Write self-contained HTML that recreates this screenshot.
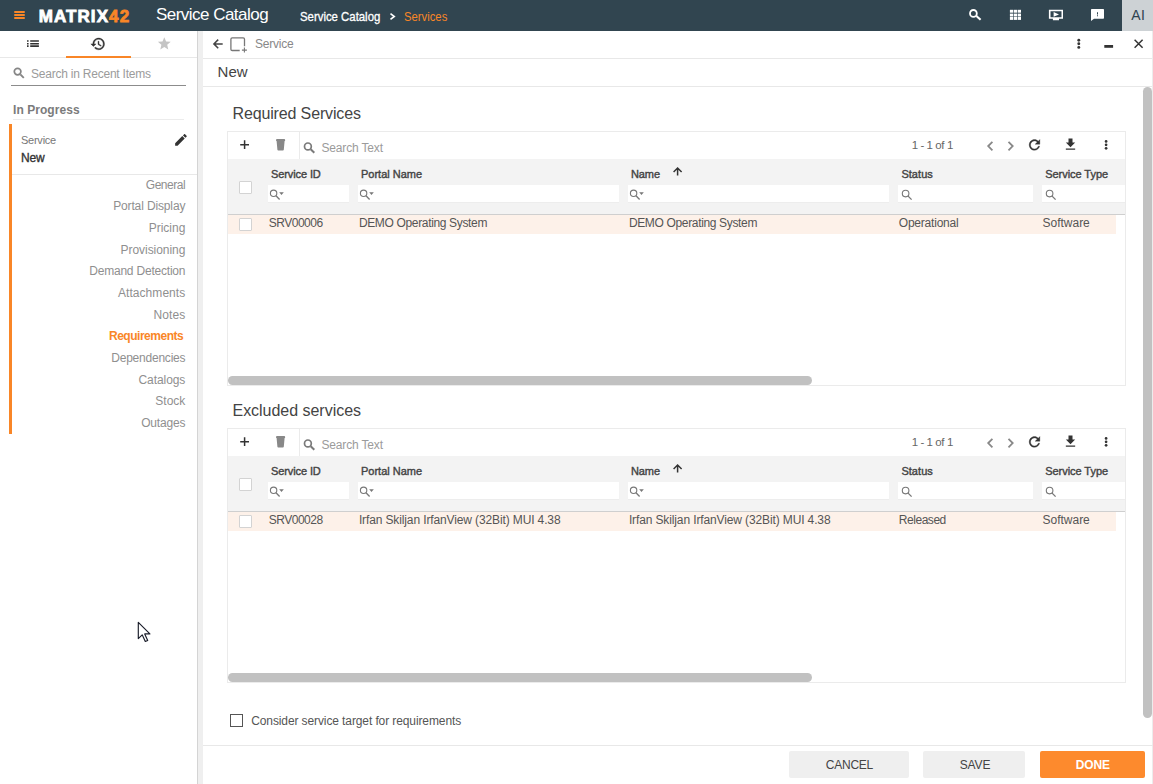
<!DOCTYPE html>
<html><head><meta charset="utf-8">
<style>
*{box-sizing:border-box;margin:0;padding:0}
html,body{width:1153px;height:784px;overflow:hidden;background:#fff;font-family:"Liberation Sans",sans-serif;color:#333}
.a{position:absolute;display:block}
.t{position:absolute;white-space:nowrap;line-height:1}
</style></head><body>
<div class="a" style="left:0px;top:0px;width:1153px;height:31px;background:#314550;"></div>
<div class="a" style="left:13.8px;top:11px;width:11.4px;height:2px;background:#f98627;border-radius:1px"></div>
<div class="a" style="left:13.8px;top:14px;width:11.4px;height:2px;background:#f98627;border-radius:1px"></div>
<div class="a" style="left:13.8px;top:17px;width:11.4px;height:2px;background:#f98627;border-radius:1px"></div>
<div class="t" style="left:38.7px;top:7.7px;font-size:17px;color:#fff;font-weight:bold;letter-spacing:1.082px;-webkit-text-stroke:0.8px #fff">MATRIX<span style="color:#f98627;-webkit-text-stroke:0.8px #f98627">42</span></div>
<div class="t" style="left:156px;top:5.8px;font-size:17px;color:#fff;font-weight:normal;letter-spacing:-0.530px;">Service Catalog</div>
<div class="t" style="left:299.5px;top:10.4px;font-size:13px;color:#fff;font-weight:normal;letter-spacing:0px;transform:scaleX(0.875);transform-origin:0 0;-webkit-text-stroke:0.3px #fff">Service Catalog</div>
<div class="t" style="left:403.5px;top:9.9px;font-size:13px;color:#f98627;font-weight:normal;letter-spacing:0px;transform:scaleX(0.868);transform-origin:0 0;">Services</div>
<div class="a" style="left:1122px;top:0px;width:31px;height:31px;background:#cdd2d5;"></div>
<div class="t" style="left:1131.3px;top:8.3px;font-size:14px;color:#2f4350;font-weight:normal;letter-spacing:0.3px;">AI</div>
<div class="a" style="left:0px;top:57px;width:197px;height:1px;background:#e8e8e8;"></div>
<div class="a" style="left:66px;top:56px;width:65px;height:2px;background:#f98627;"></div>
<div class="a" style="left:197px;top:31px;width:1px;height:753px;background:#d4d4d4;"></div>
<div class="a" style="left:198px;top:31px;width:5px;height:753px;background:#efefef;"></div>
<div class="t" style="left:31px;top:67.7px;font-size:12px;color:#9b9b9b;font-weight:normal;letter-spacing:-0.225px;">Search in Recent Items</div>
<div class="a" style="left:11px;top:85px;width:175px;height:1px;background:#8c8c8c;"></div>
<div class="t" style="left:13px;top:103.7px;font-size:12px;color:#7b7b7b;font-weight:bold;letter-spacing:0.057px;">In Progress</div>
<div class="a" style="left:13px;top:119px;width:171px;height:1px;background:#ececec;"></div>
<div class="a" style="left:9px;top:124px;width:3px;height:310px;background:#f98627;"></div>
<div class="t" style="left:21px;top:135.1px;font-size:11px;color:#777;font-weight:normal;letter-spacing:-0.248px;">Service</div>
<div class="t" style="left:21px;top:151.6px;font-size:12px;color:#333;font-weight:normal;letter-spacing:-0.158px;-webkit-text-stroke:0.35px #333">New</div>
<div class="a" style="left:12px;top:174px;width:185px;height:1px;background:#e8e8e8;"></div>
<div class="t" style="right:967.7px;top:178.6px;font-size:12px;color:#8f8f8f;font-weight:normal;letter-spacing:-0.451px;">General</div>
<div class="t" style="right:967.7px;top:200.3px;font-size:12px;color:#8f8f8f;font-weight:normal;letter-spacing:-0.133px;">Portal Display</div>
<div class="t" style="right:967.7px;top:221.9px;font-size:12px;color:#8f8f8f;font-weight:normal;letter-spacing:-0.015px;">Pricing</div>
<div class="t" style="right:967.7px;top:243.6px;font-size:12px;color:#8f8f8f;font-weight:normal;letter-spacing:-0.052px;">Provisioning</div>
<div class="t" style="right:967.7px;top:265.2px;font-size:12px;color:#8f8f8f;font-weight:normal;letter-spacing:-0.206px;">Demand Detection</div>
<div class="t" style="right:967.7px;top:286.9px;font-size:12px;color:#8f8f8f;font-weight:normal;letter-spacing:0.060px;">Attachments</div>
<div class="t" style="right:967.7px;top:308.5px;font-size:12px;color:#8f8f8f;font-weight:normal;letter-spacing:0.110px;">Notes</div>
<div class="t" style="right:969.8px;top:330.2px;font-size:12px;color:#f98627;font-weight:bold;letter-spacing:-0.485px;">Requirements</div>
<div class="t" style="right:967.7px;top:351.8px;font-size:12px;color:#8f8f8f;font-weight:normal;letter-spacing:-0.221px;">Dependencies</div>
<div class="t" style="right:967.7px;top:373.5px;font-size:12px;color:#8f8f8f;font-weight:normal;letter-spacing:-0.068px;">Catalogs</div>
<div class="t" style="right:967.7px;top:395.1px;font-size:12px;color:#8f8f8f;font-weight:normal;letter-spacing:-0.004px;">Stock</div>
<div class="t" style="right:967.7px;top:416.8px;font-size:12px;color:#8f8f8f;font-weight:normal;letter-spacing:-0.179px;">Outages</div>
<div class="t" style="left:255px;top:38.4px;font-size:12px;color:#888;font-weight:normal;letter-spacing:-0.236px;">Service</div>
<div class="a" style="left:203px;top:58px;width:950px;height:1px;background:#e8e8e8;"></div>
<div class="t" style="left:217.6px;top:64.0px;font-size:15px;color:#444;font-weight:normal;letter-spacing:0.042px;">New</div>
<div class="a" style="left:203px;top:86px;width:950px;height:1px;background:#e8e8e8;"></div>
<div class="t" style="left:232.5px;top:106.1px;font-size:16px;color:#444;font-weight:normal;letter-spacing:-0.140px;">Required Services</div>
<div class="a" style="left:227px;top:131px;width:899px;height:255px;background:#fff;border:1px solid #ebebeb"></div>
<div class="a" style="left:299px;top:132px;width:1px;height:27px;background:#ebebeb;"></div>
<div class="t" style="left:321.5px;top:142.1px;font-size:12px;color:#9b9b9b;font-weight:normal;letter-spacing:-0.166px;">Search Text</div>
<div class="t" style="left:911.7px;top:140.0px;font-size:11.5px;color:#666;font-weight:normal;letter-spacing:-0.421px;">1 - 1 of 1</div>
<div class="a" style="left:228px;top:159px;width:897px;height:55px;background:#f3f3f3;"></div>
<div class="a" style="left:228px;top:214px;width:897px;height:1px;background:#cfcfcf;"></div>
<div class="a" style="left:239px;top:180.5px;width:13px;height:13px;background:#fff;border:1px solid #d3d3d3;border-radius:1px"></div>
<div class="t" style="left:271px;top:169.2px;font-size:11px;color:#444;font-weight:normal;letter-spacing:-0.106px;-webkit-text-stroke:0.4px #444">Service ID</div>
<div class="a" style="left:268px;top:185px;width:81px;height:18px;background:#fff;border-bottom:1px solid #ededed"></div>
<div class="t" style="left:361px;top:169.2px;font-size:11px;color:#444;font-weight:normal;letter-spacing:-0.004px;-webkit-text-stroke:0.4px #444">Portal Name</div>
<div class="a" style="left:358px;top:185px;width:261px;height:18px;background:#fff;border-bottom:1px solid #ededed"></div>
<div class="t" style="left:631px;top:169.2px;font-size:11px;color:#444;font-weight:normal;letter-spacing:-0.115px;-webkit-text-stroke:0.4px #444">Name</div>
<div class="a" style="left:628px;top:185px;width:261px;height:18px;background:#fff;border-bottom:1px solid #ededed"></div>
<div class="t" style="left:901.4px;top:169.2px;font-size:11px;color:#444;font-weight:normal;letter-spacing:0.042px;-webkit-text-stroke:0.4px #444">Status</div>
<div class="a" style="left:898px;top:185px;width:135px;height:18px;background:#fff;border-bottom:1px solid #ededed"></div>
<div class="t" style="left:1045.2px;top:169.2px;font-size:11px;color:#444;font-weight:normal;letter-spacing:-0.045px;-webkit-text-stroke:0.4px #444">Service Type</div>
<div class="a" style="left:1042px;top:185px;width:83px;height:18px;background:#fff;border-bottom:1px solid #ededed"></div>
<div class="a" style="left:228px;top:215px;width:888px;height:19px;background:#fdf1e9;"></div>
<div class="a" style="left:239px;top:218px;width:13px;height:13px;background:#fff;border:1px solid #d3d3d3;border-radius:1px"></div>
<div class="t" style="left:268.7px;top:217.2px;font-size:12px;color:#555;font-weight:normal;letter-spacing:-0.475px;">SRV00006</div>
<div class="t" style="left:358.9px;top:217.2px;font-size:12px;color:#555;font-weight:normal;letter-spacing:-0.344px;">DEMO Operating System</div>
<div class="t" style="left:628.9px;top:217.2px;font-size:12px;color:#555;font-weight:normal;letter-spacing:-0.344px;">DEMO Operating System</div>
<div class="t" style="left:898.8px;top:217.2px;font-size:12px;color:#555;font-weight:normal;letter-spacing:-0.215px;">Operational</div>
<div class="t" style="left:1042.6px;top:217.2px;font-size:12px;color:#555;font-weight:normal;letter-spacing:-0.023px;">Software</div>
<div class="a" style="left:228px;top:376px;width:584px;height:9px;background:#c1c1c1;border-radius:4.5px"></div>
<div class="t" style="left:232.5px;top:403.1px;font-size:16px;color:#444;font-weight:normal;letter-spacing:-0.028px;">Excluded services</div>
<div class="a" style="left:227px;top:428px;width:899px;height:255px;background:#fff;border:1px solid #ebebeb"></div>
<div class="a" style="left:299px;top:429px;width:1px;height:27px;background:#ebebeb;"></div>
<div class="t" style="left:321.5px;top:439.1px;font-size:12px;color:#9b9b9b;font-weight:normal;letter-spacing:-0.166px;">Search Text</div>
<div class="t" style="left:911.7px;top:437.0px;font-size:11.5px;color:#666;font-weight:normal;letter-spacing:-0.421px;">1 - 1 of 1</div>
<div class="a" style="left:228px;top:456px;width:897px;height:55px;background:#f3f3f3;"></div>
<div class="a" style="left:228px;top:511px;width:897px;height:1px;background:#cfcfcf;"></div>
<div class="a" style="left:239px;top:477.5px;width:13px;height:13px;background:#fff;border:1px solid #d3d3d3;border-radius:1px"></div>
<div class="t" style="left:271px;top:466.2px;font-size:11px;color:#444;font-weight:normal;letter-spacing:-0.106px;-webkit-text-stroke:0.4px #444">Service ID</div>
<div class="a" style="left:268px;top:482px;width:81px;height:18px;background:#fff;border-bottom:1px solid #ededed"></div>
<div class="t" style="left:361px;top:466.2px;font-size:11px;color:#444;font-weight:normal;letter-spacing:-0.004px;-webkit-text-stroke:0.4px #444">Portal Name</div>
<div class="a" style="left:358px;top:482px;width:261px;height:18px;background:#fff;border-bottom:1px solid #ededed"></div>
<div class="t" style="left:631px;top:466.2px;font-size:11px;color:#444;font-weight:normal;letter-spacing:-0.115px;-webkit-text-stroke:0.4px #444">Name</div>
<div class="a" style="left:628px;top:482px;width:261px;height:18px;background:#fff;border-bottom:1px solid #ededed"></div>
<div class="t" style="left:901.4px;top:466.2px;font-size:11px;color:#444;font-weight:normal;letter-spacing:0.042px;-webkit-text-stroke:0.4px #444">Status</div>
<div class="a" style="left:898px;top:482px;width:135px;height:18px;background:#fff;border-bottom:1px solid #ededed"></div>
<div class="t" style="left:1045.2px;top:466.2px;font-size:11px;color:#444;font-weight:normal;letter-spacing:-0.045px;-webkit-text-stroke:0.4px #444">Service Type</div>
<div class="a" style="left:1042px;top:482px;width:83px;height:18px;background:#fff;border-bottom:1px solid #ededed"></div>
<div class="a" style="left:228px;top:512px;width:888px;height:19px;background:#fdf1e9;"></div>
<div class="a" style="left:239px;top:515px;width:13px;height:13px;background:#fff;border:1px solid #d3d3d3;border-radius:1px"></div>
<div class="t" style="left:268.7px;top:514.2px;font-size:12px;color:#555;font-weight:normal;letter-spacing:-0.475px;">SRV00028</div>
<div class="t" style="left:358.9px;top:514.2px;font-size:12px;color:#555;font-weight:normal;letter-spacing:-0.124px;">Irfan Skiljan IrfanView (32Bit) MUI 4.38</div>
<div class="t" style="left:628.9px;top:514.2px;font-size:12px;color:#555;font-weight:normal;letter-spacing:-0.124px;">Irfan Skiljan IrfanView (32Bit) MUI 4.38</div>
<div class="t" style="left:898.8px;top:514.2px;font-size:12px;color:#555;font-weight:normal;letter-spacing:-0.458px;">Released</div>
<div class="t" style="left:1042.6px;top:514.2px;font-size:12px;color:#555;font-weight:normal;letter-spacing:-0.023px;">Software</div>
<div class="a" style="left:228px;top:673px;width:584px;height:9px;background:#c1c1c1;border-radius:4.5px"></div>
<div class="a" style="left:230px;top:714px;width:13px;height:13px;background:#fff;border:1.5px solid #555"></div>
<div class="t" style="left:251.2px;top:715.0px;font-size:12px;color:#555;font-weight:normal;letter-spacing:-0.105px;">Consider service target for requirements</div>
<div class="a" style="left:1152px;top:31px;width:1px;height:753px;background:#ececec;"></div>
<div class="a" style="left:1143px;top:87px;width:9px;height:631px;background:#c1c1c1;border-radius:4.5px"></div>
<div class="a" style="left:203px;top:745px;width:950px;height:1px;background:#e8e8e8;"></div>
<div class="a" style="left:789px;top:751px;width:120px;height:27px;background:#efefef;border-radius:2px"></div>
<div class="t" style="left:825.8px;top:759.1px;font-size:12px;color:#444;font-weight:normal;letter-spacing:-0.237px;">CANCEL</div>
<div class="a" style="left:923px;top:751px;width:102px;height:27px;background:#efefef;border-radius:2px"></div>
<div class="t" style="left:959.7px;top:759.1px;font-size:12px;color:#444;font-weight:normal;letter-spacing:-0.142px;">SAVE</div>
<div class="a" style="left:1040px;top:751px;width:105px;height:27px;background:#fd8a2d;border-radius:2px"></div>
<div class="t" style="left:1075.8px;top:759.1px;font-size:12px;color:#fff;font-weight:bold;letter-spacing:-0.157px;">DONE</div>
<svg class="a" style="left:0;top:0" width="1153" height="784" viewBox="0 0 1153 784"><path d="M390.5 13.6L394.3 16.5L390.5 19.4" fill="none" stroke="#fff" stroke-width="1.6" /><circle cx="973.4" cy="13.4" r="3.4" fill="none" stroke="#fff" stroke-width="1.8"/><path d="M976.39 16.06L980.6 19.8" stroke="#fff" stroke-width="2.1" stroke-linecap="butt"/><path d="M1009.9 9.8h3.3v2.9h-3.3z" fill="#fff"/><path d="M1009.9 13.6h3.3v2.9h-3.3z" fill="#fff"/><path d="M1009.9 17.0h3.3v2.9h-3.3z" fill="#fff"/><path d="M1013.8 9.8h3.3v2.9h-3.3z" fill="#fff"/><path d="M1013.8 13.6h3.3v2.9h-3.3z" fill="#fff"/><path d="M1013.8 17.0h3.3v2.9h-3.3z" fill="#fff"/><path d="M1017.7 9.8h3.3v2.9h-3.3z" fill="#fff"/><path d="M1017.7 13.6h3.3v2.9h-3.3z" fill="#fff"/><path d="M1017.7 17.0h3.3v2.9h-3.3z" fill="#fff"/><path d="M1048.9 9.7h14.1v9h-4v1.6h-6.1v-1.6h-4zM1050.5 11.2v6h11v-6z" fill="#fff"/><path d="M1053.6 12l5.4 2.4-5.4 2.4z" fill="#fff"/><path d="M1092 8.9h11c.6 0 1 .4 1 1v7.8c0 .6-.4 1-1 1h-9l-3 2.3v-11.1c0-.6.4-1 1-1z" fill="#fff"/><path d="M1097 12.3h1v2.2h-1zM1097 15.2h1v1h-1z" fill="#314550"/><path d="M27 40.2h1.6v1.6h-1.6zM30.2 40.2h8.7v1.6h-8.7z" fill="#333"/><path d="M27 42.9h1.6v1.6h-1.6zM30.2 42.9h8.7v1.6h-8.7z" fill="#333"/><path d="M27 45.3h1.6v1.6h-1.6zM30.2 45.3h8.7v1.6h-8.7z" fill="#333"/><path transform="translate(90.20,36.10) scale(0.6500)" d="M13 3c-4.970 0-9 4.03-9 9H1l3.89 3.89.07.14L9 12H6c0-3.87 3.13-7 7-7s7 3.13 7 7-3.13 7-7 7c-1.93 0-3.68-.79-4.94-2.06l-1.42 1.42C8.27 19.99 10.51 21 13 21c4.97 0 9-4.03 9-9s-4.03-9-9-9zm-1 5v5l4.28 2.54.72-1.21-3.5-2.08V8H12z" fill="#333" stroke="#333" stroke-width="0.6"/><path transform="translate(156.60,35.90) scale(0.6417)" d="M12 17.27L18.18 21l-1.64-7.03L22 9.24l-7.19-.61L12 2 9.19 8.63 2 9.24l5.46 4.73L5.82 21z" fill="#c4c4c4"/><circle cx="17.6" cy="71.6" r="3.3" fill="none" stroke="#858585" stroke-width="1.7"/><path d="M20.32 74.32L23.8 77.8" stroke="#858585" stroke-width="1.9" stroke-linecap="butt"/><path transform="translate(173.20,132.10) scale(0.6458)" d="M3 17.25V21h3.75L17.81 9.94l-3.75-3.75L3 17.25zM20.71 7.04c.39-.39.39-1.02 0-1.41l-2.34-2.34c-.39-.39-1.02-.39-1.41 0l-1.83 1.83 3.75 3.75 1.83-1.83z" fill="#333"/><path d="M222.7 43.9H214.2M218.2 39.6L213.9 43.9L218.2 48.2" fill="none" stroke="#444" stroke-width="1.5" /><path d="M240.5 37.9h-8.3c-.8 0-1.3.5-1.3 1.3v10c0 .8.5 1.3 1.3 1.3h7.5M244.5 46.2v-7c0-.8-.5-1.3-1.3-1.3h-2.7" fill="none" stroke="#777" stroke-width="1.3" /><path d="M244.4 47.6v5M241.9 50.1h5" fill="none" stroke="#777" stroke-width="1.1" /><circle cx="1078.8" cy="40.2" r="1.45" fill="#333"/><circle cx="1078.8" cy="43.8" r="1.45" fill="#333"/><circle cx="1078.8" cy="47.4" r="1.45" fill="#333"/><path d="M1104.3 45h8.8v2.8h-8.8z" fill="#333"/><path d="M1134.6 39.8L1142.6 47.8M1142.6 39.8L1134.6 47.8" fill="none" stroke="#333" stroke-width="1.5" /><path d="M244.6 140.3v8.8M240.2 144.7h8.8" fill="none" stroke="#333" stroke-width="1.5" /><path d="M277.2 139h6.8c.7 0 1.1.4 1.1 1v1.1h-9v-1.1c0-.6.4-1 1.1-1zM276.6 141h8l-.8 8.8c-.1.4-.4.6-.8.6h-4.8c-.4 0-.7-.2-.8-.6z" fill="#888"/><circle cx="307.9" cy="146.4" r="3.4" fill="none" stroke="#7a7a7a" stroke-width="1.7"/><path d="M310.71 149.17L314.3 152.7" stroke="#7a7a7a" stroke-width="2" stroke-linecap="butt"/><path d="M992.4 141.8L988.2 146.1L992.4 150.4" fill="none" stroke="#888" stroke-width="1.8" /><path d="M1008.5 141.8L1012.7 146.1L1008.5 150.4" fill="none" stroke="#888" stroke-width="1.8" /><path transform="translate(1026.50,136.90) scale(0.6667)" d="M17.65 6.35C16.2 4.9 14.21 4 12 4c-4.42 0-7.99 3.58-7.99 8s3.57 8 7.99 8c3.73 0 6.84-2.55 7.73-6h-2.08c-.82 2.33-3.04 4-5.65 4-3.31 0-6-2.690-6-6s2.69-6 6-6c1.66 0 3.14.69 4.22 1.78L13 11h7V4l-2.35 2.35z" fill="#333" stroke="#333" stroke-width="0.5"/><path transform="translate(1062.50,136.50) scale(0.6667)" d="M19 9h-4V3H9v6H5l7 7 7-7zM5 18v2h14v-2H5z" fill="#333"/><circle cx="1106.1" cy="141.4" r="1.35" fill="#333"/><circle cx="1106.1" cy="144.8" r="1.35" fill="#333"/><circle cx="1106.1" cy="148.3" r="1.35" fill="#333"/><circle cx="273.6" cy="193.3" r="3.2" fill="none" stroke="#777" stroke-width="1.1"/><path d="M276.00 195.78L279.6 199.5" stroke="#777" stroke-width="1.3" stroke-linecap="butt"/><path d="M279.2 192.3h4.6l-2.3 2.8z" fill="#777"/><circle cx="363.6" cy="193.3" r="3.2" fill="none" stroke="#777" stroke-width="1.1"/><path d="M366.00 195.78L369.6 199.5" stroke="#777" stroke-width="1.3" stroke-linecap="butt"/><path d="M369.2 192.3h4.6l-2.3 2.8z" fill="#777"/><circle cx="633.6" cy="193.3" r="3.2" fill="none" stroke="#777" stroke-width="1.1"/><path d="M636.00 195.78L639.6 199.5" stroke="#777" stroke-width="1.3" stroke-linecap="butt"/><path d="M639.2 192.3h4.6l-2.3 2.8z" fill="#777"/><circle cx="905.6" cy="193.6" r="3.3" fill="none" stroke="#777" stroke-width="1.1"/><path d="M908.11 196.11L911.6 199.6" stroke="#777" stroke-width="1.3" stroke-linecap="butt"/><circle cx="1049.6" cy="193.6" r="3.3" fill="none" stroke="#777" stroke-width="1.1"/><path d="M1052.11 196.11L1055.6 199.6" stroke="#777" stroke-width="1.3" stroke-linecap="butt"/><path d="M677.6 175.6V168.4M673.6 172L677.6 168L681.6 172" fill="none" stroke="#333" stroke-width="1.5" /><path d="M244.6 437.3v8.8M240.2 441.7h8.8" fill="none" stroke="#333" stroke-width="1.5" /><path d="M277.2 436h6.8c.7 0 1.1.4 1.1 1v1.1h-9v-1.1c0-.6.4-1 1.1-1zM276.6 438h8l-.8 8.8c-.1.4-.4.6-.8.6h-4.8c-.4 0-.7-.2-.8-.6z" fill="#888"/><circle cx="307.9" cy="443.4" r="3.4" fill="none" stroke="#7a7a7a" stroke-width="1.7"/><path d="M310.71 446.17L314.3 449.7" stroke="#7a7a7a" stroke-width="2" stroke-linecap="butt"/><path d="M992.4 438.8L988.2 443.1L992.4 447.4" fill="none" stroke="#888" stroke-width="1.8" /><path d="M1008.5 438.8L1012.7 443.1L1008.5 447.4" fill="none" stroke="#888" stroke-width="1.8" /><path transform="translate(1026.50,433.90) scale(0.6667)" d="M17.65 6.35C16.2 4.9 14.21 4 12 4c-4.42 0-7.99 3.58-7.99 8s3.57 8 7.99 8c3.73 0 6.84-2.55 7.73-6h-2.08c-.82 2.33-3.04 4-5.65 4-3.31 0-6-2.690-6-6s2.69-6 6-6c1.66 0 3.14.69 4.22 1.78L13 11h7V4l-2.35 2.35z" fill="#333" stroke="#333" stroke-width="0.5"/><path transform="translate(1062.50,433.50) scale(0.6667)" d="M19 9h-4V3H9v6H5l7 7 7-7zM5 18v2h14v-2H5z" fill="#333"/><circle cx="1106.1" cy="438.4" r="1.35" fill="#333"/><circle cx="1106.1" cy="441.8" r="1.35" fill="#333"/><circle cx="1106.1" cy="445.3" r="1.35" fill="#333"/><circle cx="273.6" cy="490.3" r="3.2" fill="none" stroke="#777" stroke-width="1.1"/><path d="M276.00 492.78L279.6 496.5" stroke="#777" stroke-width="1.3" stroke-linecap="butt"/><path d="M279.2 489.3h4.6l-2.3 2.8z" fill="#777"/><circle cx="363.6" cy="490.3" r="3.2" fill="none" stroke="#777" stroke-width="1.1"/><path d="M366.00 492.78L369.6 496.5" stroke="#777" stroke-width="1.3" stroke-linecap="butt"/><path d="M369.2 489.3h4.6l-2.3 2.8z" fill="#777"/><circle cx="633.6" cy="490.3" r="3.2" fill="none" stroke="#777" stroke-width="1.1"/><path d="M636.00 492.78L639.6 496.5" stroke="#777" stroke-width="1.3" stroke-linecap="butt"/><path d="M639.2 489.3h4.6l-2.3 2.8z" fill="#777"/><circle cx="905.6" cy="490.6" r="3.3" fill="none" stroke="#777" stroke-width="1.1"/><path d="M908.11 493.11L911.6 496.6" stroke="#777" stroke-width="1.3" stroke-linecap="butt"/><circle cx="1049.6" cy="490.6" r="3.3" fill="none" stroke="#777" stroke-width="1.1"/><path d="M1052.11 493.11L1055.6 496.6" stroke="#777" stroke-width="1.3" stroke-linecap="butt"/><path d="M677.6 472.6V465.4M673.6 469L677.6 465L681.6 469" fill="none" stroke="#333" stroke-width="1.5" /></svg>
<svg class="a" style="left:137px;top:621px" width="16" height="22" viewBox="0 0 16 22"><path d="M1.3 1.3v16.3l3.9-3.8 3.1 6.7 2.4-1-3-6.6h5.2z" fill="#fff" stroke="#1a1d2a" stroke-width="1.15" stroke-linejoin="round"/></svg>
</body></html>
